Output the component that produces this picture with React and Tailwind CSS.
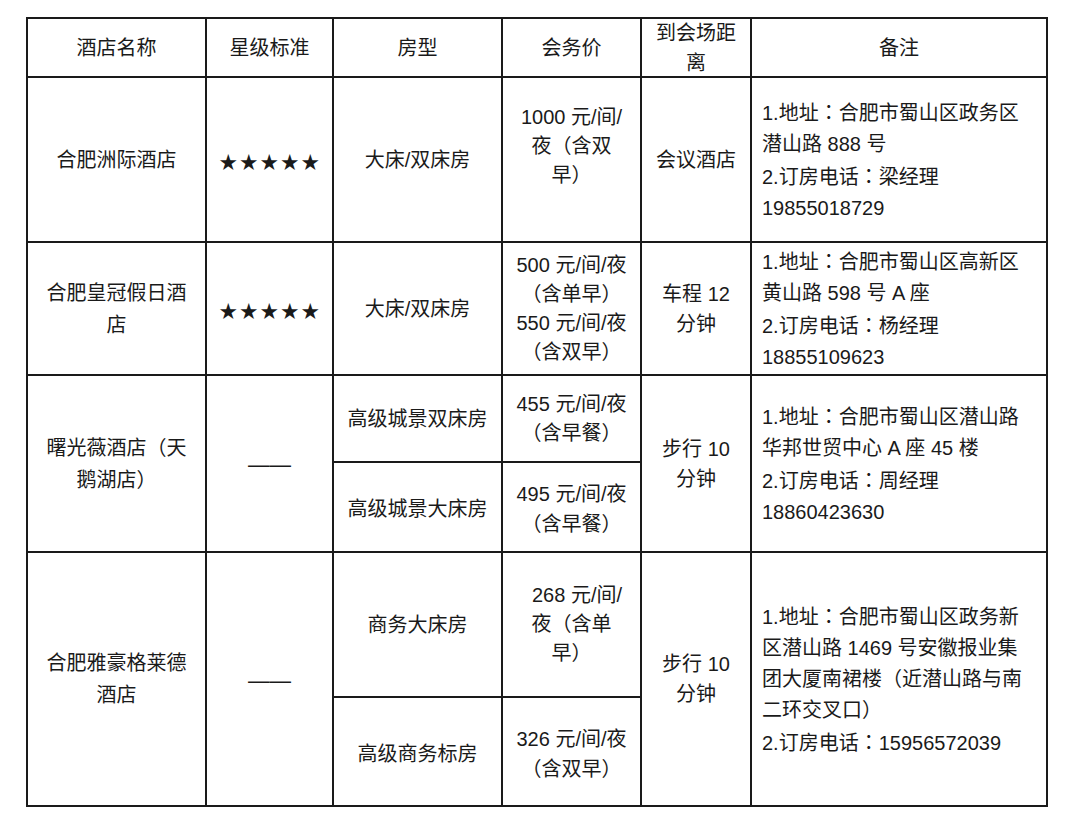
const line = "border-r-2 border-b-2 border-[#1a1a1a]";
const center = `${line} flex flex-col items-center justify-center text-center`;

// centred full-width colon, as in the source document
const Colon = () => <span className="font-['Noto_Sans_CJK_TC',sans-serif]">：</span>;

const hotels = [
  {
    name: ["合肥洲际酒店"],
    stars: true,
    rooms: [{ type: "大床/双床房", price: ["1000 元/间/", "夜（含双", "早）"], padBottom: true }],
    distance: ["会议酒店"],
    remark: [["1.地址", "合肥市蜀山区政务区"], "潜山路 888 号", ["2.订房电话", "梁经理"], "19855018729"],
  },
  {
    name: ["合肥皇冠假日酒", "店"],
    stars: true,
    rooms: [{ type: "大床/双床房", price: ["500 元/间/夜", "（含单早）", "550 元/间/夜", "（含双早）"] }],
    distance: ["车程 12", "分钟"],
    remark: [["1.地址", "合肥市蜀山区高新区"], "黄山路 598 号 A 座", ["2.订房电话", "杨经理"], "18855109623"],
  },
  {
    name: ["曙光薇酒店（天", "鹅湖店）"],
    stars: false,
    rooms: [
      { type: "高级城景双床房", price: ["455 元/间/夜", "（含早餐）"] },
      { type: "高级城景大床房", price: ["495 元/间/夜", "（含早餐）"] },
    ],
    distance: ["步行 10", "分钟"],
    remark: [["1.地址", "合肥市蜀山区潜山路"], "华邦世贸中心 A 座 45 楼", ["2.订房电话", "周经理"], "18860423630"],
  },
  {
    name: ["合肥雅豪格莱德", "酒店"],
    stars: false,
    rooms: [
      { type: "商务大床房", price: ["268 元/间/", "夜（含单", "早）"], indentFirst: true },
      { type: "高级商务标房", price: ["326 元/间/夜", "（含双早）"] },
    ],
    distance: ["步行 10", "分钟"],
    remark: [
      ["1.地址", "合肥市蜀山区政务新"],
      "区潜山路 1469 号安徽报业集",
      "团大厦南裙楼（近潜山路与南",
      "二环交叉口）",
      ["2.订房电话", "15956572039"],
    ],
  },
];

function Lines({ items, className = "" }) {
  return items.map((t, i) => (
    <div key={i} className={className}>
      {Array.isArray(t) ? (
        <>
          {t[0]}
          <Colon />
          {t[1]}
        </>
      ) : (
        t
      )}
    </div>
  ));
}

export default function App() {
  return (
    <div className="min-h-screen bg-white pl-[26px] pt-[17px] text-[20px] text-[#1a1a1a] font-['Liberation_Sans','Noto_Sans_CJK_SC',sans-serif]">
      <div className="grid w-fit grid-cols-[179px_127px_169px_139px_110px_296px] grid-rows-[59px_165px_133px_87px_90px_145px_109px] border-l-2 border-t-2 border-[#1a1a1a]">
        {/* header */}
        <div className={`${center} leading-[30px]`}>酒店名称</div>
        <div className={`${center} leading-[30px]`}>星级标准</div>
        <div className={`${center} leading-[30px]`}>房型</div>
        <div className={`${center} leading-[30px]`}>会务价</div>
        <div className={`${center} leading-[30px]`}>
          <div>到会场距</div>
          <div>离</div>
        </div>
        <div className={`${center} leading-[30px]`}>备注</div>

        {hotels.map((h, idx) => {
          const span = h.rooms.length > 1 ? "row-span-2" : "";
          const first = h.rooms[0];
          return [
            <div key={`n${idx}`} className={`${center} ${span} leading-[32px]`}>
              <Lines items={h.name} />
            </div>,
            <div key={`s${idx}`} className={`${center} ${span}`}>
              {h.stars ? (
                <span className="font-['Noto_Sans_CJK_SC',sans-serif] text-[18px] leading-[30px] tracking-[2.5px] pl-[2px] pt-[2px]">
                  ★★★★★
                </span>
              ) : (
                <span className="font-['Liberation_Sans',sans-serif] text-[21.5px] leading-[30px] pt-[3px]">——</span>
              )}
            </div>,
            <div key={`r${idx}`} className={`${center} leading-[30px]`}>{first.type}</div>,
            <div key={`p${idx}`} className={`${center} leading-[29px] ${first.padBottom ? "pb-[27px]" : ""}`}>
              {first.price.map((t, i) => (
                <div key={i} className={first.indentFirst && i === 0 ? "pl-[11px]" : ""}>
                  {t}
                </div>
              ))}
            </div>,
            <div key={`d${idx}`} className={`${center} ${span} leading-[30px]`}>
              <Lines items={h.distance} />
            </div>,
            <div key={`m${idx}`} className={`${line} ${span} flex flex-col justify-center pl-[10px] leading-[31px]`}>
              <Lines items={h.remark} />
            </div>,
            ...h.rooms.slice(1).flatMap((r, j) => [
              <div key={`r${idx}-${j}`} className={`${center} leading-[30px] pt-[4px]`}>{r.type}</div>,
              <div key={`p${idx}-${j}`} className={`${center} leading-[30px] pt-[4px]`}>
                <Lines items={r.price} />
              </div>,
            ]),
          ];
        })}
      </div>
    </div>
  );
}
